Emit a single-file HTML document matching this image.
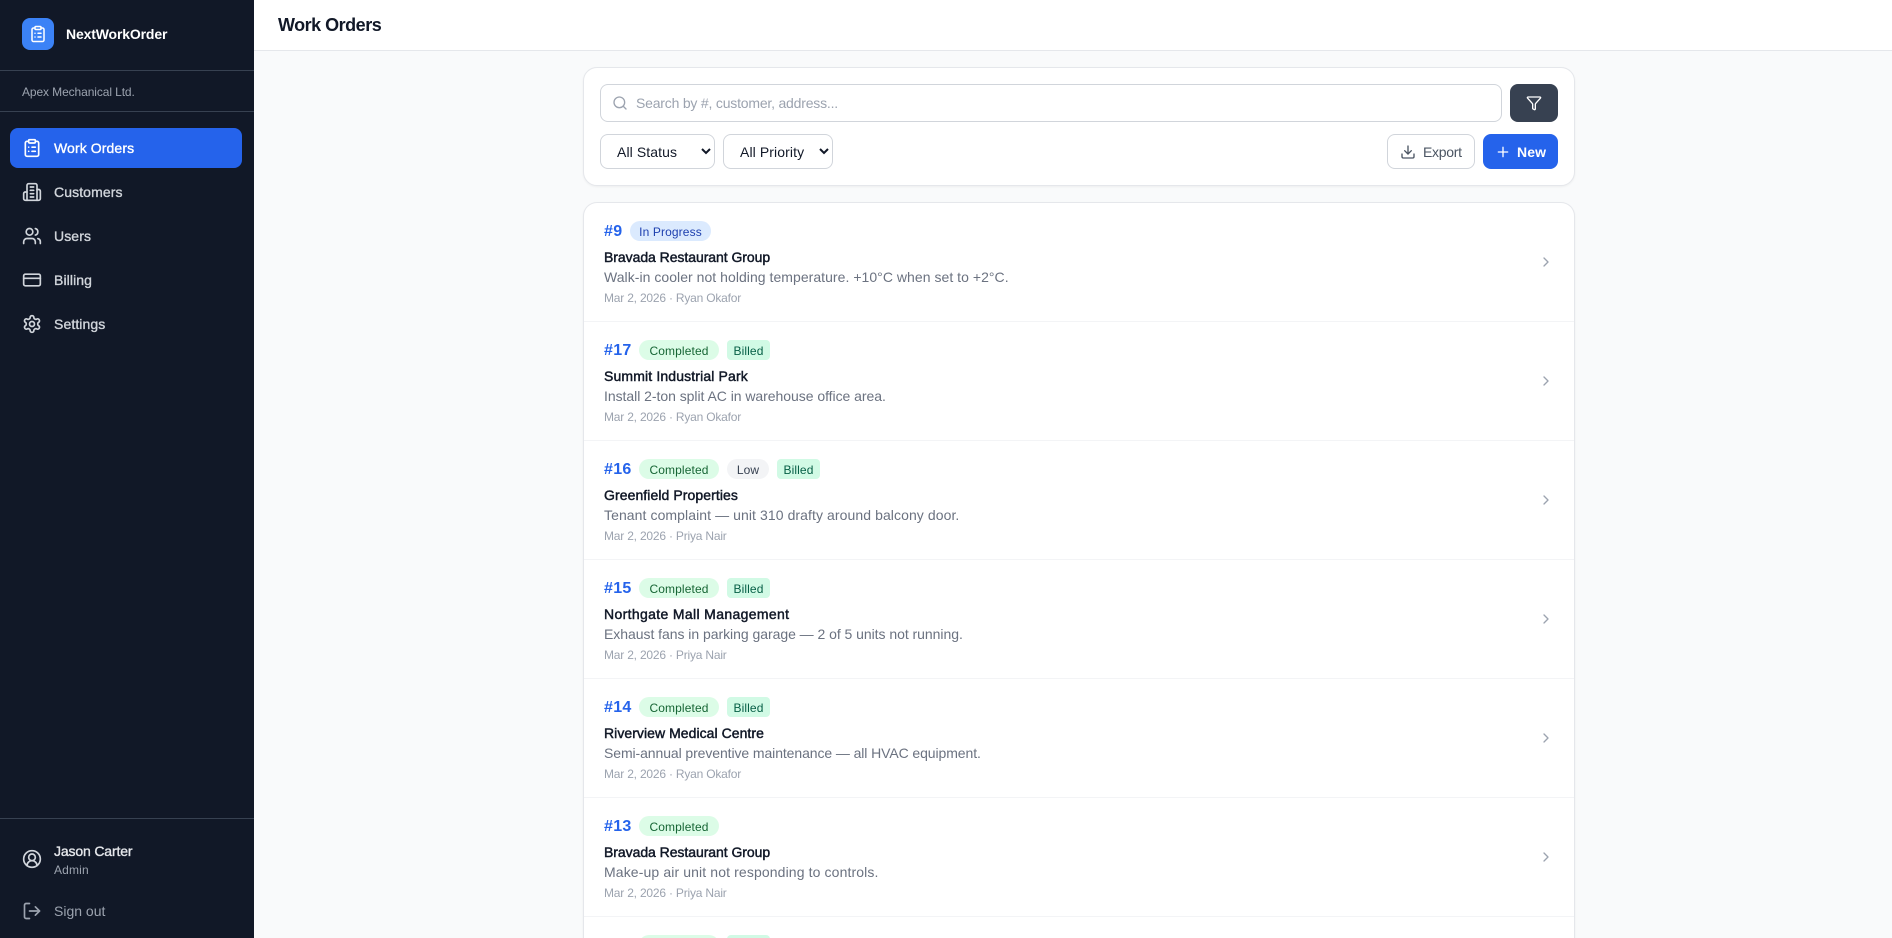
<!DOCTYPE html>
<html lang="en"><head><meta charset="utf-8"><title>Work Orders</title>
<style>
*{box-sizing:border-box;margin:0;padding:0}
html,body{width:1892px;height:938px;overflow:hidden;background:#f9fafb;font-family:"Liberation Sans",sans-serif;color:#111827}
#app{position:relative;width:1892px;height:938px;overflow:hidden;background:#f9fafb}
svg{fill:none;stroke:currentColor;stroke-width:2;stroke-linecap:round;stroke-linejoin:round;display:block}
.a{position:absolute;white-space:nowrap}
#side{position:absolute;left:0;top:0;width:254px;height:938px;background:#111827}
.hr{position:absolute;left:0;width:254px;height:1px;background:#374151}
.nav{position:absolute;left:10px;width:232px;height:40px;border-radius:8px;color:#d1d5db;font-size:14px;letter-spacing:.1px;-webkit-text-stroke:.35px currentColor}
.nav svg{position:absolute;left:12px;top:10px;-webkit-text-stroke:0}
.nav span{position:absolute;left:44px;top:0;line-height:41px}
.nav.on{background:#2563eb;color:#fff}
.card{position:absolute;left:583px;width:992px;background:#fff;border:1px solid #e5e7eb;border-radius:14px;box-shadow:0 1px 2px rgba(0,0,0,.05)}
.row{position:relative;height:119px;border-bottom:1px solid #f3f4f6}
.row .n{position:absolute;left:20px;top:19px;line-height:20px;font-size:16px;font-weight:700;color:#2563eb;letter-spacing:.3px}
.b{position:absolute;top:18px;height:20px;line-height:22px;border-radius:10px;text-align:center;font-size:12px;letter-spacing:.12px;white-space:nowrap}
.ip{background:#dbeafe;color:#1e40af}.c{background:#dcfce7;color:#166534}.l{background:#f3f4f6;color:#374151}
.bi{background:#d1fae5;color:#065f46;border-radius:4px}
.t{position:absolute;left:20px;top:44px;line-height:20px;font-size:14px;white-space:nowrap;color:#111827;letter-spacing:.05px;-webkit-text-stroke:.45px currentColor}
.d{position:absolute;left:20px;top:64px;line-height:20px;font-size:14px;color:#6b7280;white-space:nowrap;letter-spacing:.04px}
.m{position:absolute;left:20px;top:87px;line-height:16px;font-size:12px;color:#9ca3af;white-space:nowrap;letter-spacing:-.2px}
.ch{position:absolute;left:954px;top:51px;color:#9ca3af}
select{position:absolute;top:134px;height:35px;background:#fff;border:1px solid #d1d5db;border-radius:8px;font-family:"Liberation Sans",sans-serif;font-size:14px;letter-spacing:.1px;color:#111827;padding:0 0 0 12px}
</style></head><body>
<div id="app">
<aside id="side">
<div class="a" style="left:22px;top:18px;width:32px;height:32px;border-radius:8px;background:#3b82f6;color:#fff"><svg style="margin:7px" width="18" height="18" viewBox="0 0 24 24"><rect x="8" y="2" width="8" height="4" rx="1"/><path d="M16 4h2a2 2 0 0 1 2 2v14a2 2 0 0 1-2 2H6a2 2 0 0 1-2-2V6a2 2 0 0 1 2-2h2"/><path d="M12 11h4M12 16h4M8 11h.01M8 16h.01"/></svg></div>
<div class="a" style="left:66px;top:24px;line-height:20px;font-size:14px;font-weight:700;color:#fff;letter-spacing:-.15px">NextWorkOrder</div>
<div class="hr" style="top:70px"></div>
<div class="a" style="left:22px;top:84px;line-height:16px;font-size:12px;color:#9ca3af;letter-spacing:-.1px">Apex Mechanical Ltd.</div>
<div class="hr" style="top:111px"></div>
<div class="nav on" style="top:128px"><svg width="20" height="20" viewBox="0 0 24 24"><rect x="8" y="2" width="8" height="4" rx="1"/><path d="M16 4h2a2 2 0 0 1 2 2v14a2 2 0 0 1-2 2H6a2 2 0 0 1-2-2V6a2 2 0 0 1 2-2h2"/><path d="M12 11h4M12 16h4M8 11h.01M8 16h.01"/></svg><span>Work Orders</span></div>
<div class="nav" style="top:172px"><svg width="20" height="20" viewBox="0 0 24 24"><path d="M6 22V4a2 2 0 0 1 2-2h8a2 2 0 0 1 2 2v18Z"/><path d="M6 12H4a2 2 0 0 0-2 2v6a2 2 0 0 0 2 2h2"/><path d="M18 9h2a2 2 0 0 1 2 2v9a2 2 0 0 1-2 2h-2"/><path d="M10 6h4M10 10h4M10 14h4M10 18h4"/></svg><span>Customers</span></div>
<div class="nav" style="top:216px"><svg width="20" height="20" viewBox="0 0 24 24"><path d="M16 21v-2a4 4 0 0 0-4-4H6a4 4 0 0 0-4 4v2"/><circle cx="9" cy="7" r="4"/><path d="M22 21v-2a4 4 0 0 0-3-3.87"/><path d="M16 3.13a4 4 0 0 1 0 7.75"/></svg><span>Users</span></div>
<div class="nav" style="top:260px"><svg width="20" height="20" viewBox="0 0 24 24"><rect x="2" y="5" width="20" height="14" rx="2"/><path d="M2 10h20"/></svg><span>Billing</span></div>
<div class="nav" style="top:304px"><svg width="20" height="20" viewBox="0 0 24 24"><path d="M12.22 2h-.44a2 2 0 0 0-2 2v.18a2 2 0 0 1-1 1.73l-.43.25a2 2 0 0 1-2 0l-.15-.08a2 2 0 0 0-2.73.73l-.22.38a2 2 0 0 0 .73 2.73l.15.1a2 2 0 0 1 1 1.72v.51a2 2 0 0 1-1 1.74l-.15.09a2 2 0 0 0-.73 2.73l.22.38a2 2 0 0 0 2.73.73l.15-.08a2 2 0 0 1 2 0l.43.25a2 2 0 0 1 1 1.73V20a2 2 0 0 0 2 2h.44a2 2 0 0 0 2-2v-.18a2 2 0 0 1 1-1.73l.43-.25a2 2 0 0 1 2 0l.15.08a2 2 0 0 0 2.73-.73l.22-.39a2 2 0 0 0-.73-2.73l-.15-.08a2 2 0 0 1-1-1.74v-.5a2 2 0 0 1 1-1.74l.15-.09a2 2 0 0 0 .73-2.73l-.22-.38a2 2 0 0 0-2.73-.73l-.15.08a2 2 0 0 1-2 0l-.43-.25a2 2 0 0 1-1-1.73V4a2 2 0 0 0-2-2z"/><circle cx="12" cy="12" r="3"/></svg><span>Settings</span></div>
<div class="hr" style="top:818px"></div>
<svg class="a" style="left:22px;top:849px;color:#d1d5db" width="20" height="20" viewBox="0 0 24 24"><path d="M18 20a6 6 0 0 0-12 0"/><circle cx="12" cy="10" r="4"/><circle cx="12" cy="12" r="10"/></svg>
<div class="a" style="left:54px;top:841px;line-height:20px;font-size:14px;color:#e5e7eb;letter-spacing:-.15px;-webkit-text-stroke:.35px currentColor">Jason Carter</div>
<div class="a" style="left:54px;top:862px;line-height:16px;font-size:12px;color:#9ca3af;letter-spacing:.15px">Admin</div>
<svg class="a" style="left:22px;top:901px;color:#9ca3af" width="20" height="20" viewBox="0 0 24 24"><path d="M9 21H5a2 2 0 0 1-2-2V5a2 2 0 0 1 2-2h4"/><path d="M16 17l5-5-5-5"/><path d="M21 12H9"/></svg>
<div class="a" style="left:54px;top:901px;line-height:20px;font-size:14px;color:#9ca3af;letter-spacing:0">Sign out</div>
</aside>
<header class="a" style="left:254px;top:0;width:1638px;height:51px;background:#fff;border-bottom:1px solid #e5e7eb">
<div class="a" style="left:24px;top:11px;line-height:28px;font-size:18px;font-weight:700;color:#111827;letter-spacing:-.5px">Work Orders</div>
</header>

<div class="card" style="top:67px;height:119px"></div>
<div class="a" style="left:600px;top:84px;width:902px;height:38px;background:#fff;border:1px solid #d1d5db;border-radius:8px"></div>
<svg class="a" style="left:612px;top:95px;color:#9ca3af" width="16" height="16" viewBox="0 0 24 24"><circle cx="11" cy="11" r="8"/><path d="m21 21-4.3-4.3"/></svg>
<div class="a" style="left:636px;top:93px;line-height:20px;font-size:14px;color:#9ca3af;letter-spacing:-.2px">Search by #, customer, address...</div>
<div class="a" style="left:1510px;top:84px;width:48px;height:38px;border-radius:8px;background:#374151;color:#fff"><svg style="margin:11px 16px" width="16" height="16" viewBox="0 0 24 24"><path d="M10 20a1 1 0 0 0 .553.895l2 1A1 1 0 0 0 14 21v-7a2 2 0 0 1 .517-1.341L21.74 4.67A1 1 0 0 0 21 3H3a1 1 0 0 0-.742 1.67l7.225 7.989A2 2 0 0 1 10 14z"/></svg></div>
<select style="left:600px;width:115px"><option>All Status</option></select>
<select style="left:723px;width:110px"><option>All Priority</option></select>
<div class="a" style="left:1387px;top:134px;width:88px;height:35px;background:#fff;border:1px solid #d1d5db;border-radius:8px"></div>
<svg class="a" style="left:1400px;top:144px;color:#4b5563" width="16" height="16" viewBox="0 0 24 24"><path d="M12 15V3"/><path d="M21 15v4a2 2 0 0 1-2 2H5a2 2 0 0 1-2-2v-4"/><path d="m7 10 5 5 5-5"/></svg>
<div class="a" style="left:1423px;top:142px;line-height:20px;font-size:14px;color:#4b5563;letter-spacing:-.3px">Export</div>
<div class="a" style="left:1483px;top:134px;width:75px;height:35px;background:#2563eb;border-radius:8px"></div>
<svg class="a" style="left:1495px;top:144px;color:#fff" width="16" height="16" viewBox="0 0 24 24"><path d="M5 12h14M12 5v14"/></svg>
<div class="a" style="left:1517px;top:142px;line-height:20px;font-size:14px;font-weight:700;color:#fff;letter-spacing:.1px">New</div>

<div class="card" style="top:202px;height:736px;overflow:hidden;border-bottom:0;border-radius:14px 14px 0 0">
<div class="row"><div class="n">#9</div><div class="b ip" style="left:46px;width:81px">In Progress</div><div class="t" style="letter-spacing:-.05px">Bravada Restaurant Group</div><div class="d">Walk-in cooler not holding temperature. +10°C when set to +2°C.</div><div class="m">Mar 2, 2026 · Ryan Okafor</div><svg class="ch" width="16" height="16" viewBox="0 0 24 24"><path d="m9 18 6-6-6-6"/></svg></div>
<div class="row"><div class="n">#17</div><div class="b c" style="left:55px;width:80px">Completed</div><div class="b bi" style="left:143px;width:43px">Billed</div><div class="t" style="letter-spacing:.14px">Summit Industrial Park</div><div class="d" style="letter-spacing:-.04px">Install 2-ton split AC in warehouse office area.</div><div class="m">Mar 2, 2026 · Ryan Okafor</div><svg class="ch" width="16" height="16" viewBox="0 0 24 24"><path d="m9 18 6-6-6-6"/></svg></div>
<div class="row"><div class="n">#16</div><div class="b c" style="left:55px;width:80px">Completed</div><div class="b l" style="left:143px;width:42px">Low</div><div class="b bi" style="left:193px;width:43px">Billed</div><div class="t" style="letter-spacing:.08px">Greenfield Properties</div><div class="d" style="letter-spacing:.08px">Tenant complaint — unit 310 drafty around balcony door.</div><div class="m">Mar 2, 2026 · Priya Nair</div><svg class="ch" width="16" height="16" viewBox="0 0 24 24"><path d="m9 18 6-6-6-6"/></svg></div>
<div class="row"><div class="n">#15</div><div class="b c" style="left:55px;width:80px">Completed</div><div class="b bi" style="left:143px;width:43px">Billed</div><div class="t" style="letter-spacing:.35px">Northgate Mall Management</div><div class="d" style="letter-spacing:-.04px">Exhaust fans in parking garage — 2 of 5 units not running.</div><div class="m">Mar 2, 2026 · Priya Nair</div><svg class="ch" width="16" height="16" viewBox="0 0 24 24"><path d="m9 18 6-6-6-6"/></svg></div>
<div class="row"><div class="n">#14</div><div class="b c" style="left:55px;width:80px">Completed</div><div class="b bi" style="left:143px;width:43px">Billed</div><div class="t" style="letter-spacing:.05px">Riverview Medical Centre</div><div class="d" style="letter-spacing:-.09px">Semi-annual preventive maintenance — all HVAC equipment.</div><div class="m">Mar 2, 2026 · Ryan Okafor</div><svg class="ch" width="16" height="16" viewBox="0 0 24 24"><path d="m9 18 6-6-6-6"/></svg></div>
<div class="row"><div class="n">#13</div><div class="b c" style="left:55px;width:80px">Completed</div><div class="t" style="letter-spacing:-.05px">Bravada Restaurant Group</div><div class="d" style="letter-spacing:.12px">Make-up air unit not responding to controls.</div><div class="m">Mar 2, 2026 · Priya Nair</div><svg class="ch" width="16" height="16" viewBox="0 0 24 24"><path d="m9 18 6-6-6-6"/></svg></div>
<div class="row" style="border-bottom:0"><div class="b c" style="left:55px;width:80px"></div><div class="b bi" style="left:143px;width:43px"></div></div>
</div>
</div>
</body></html>
